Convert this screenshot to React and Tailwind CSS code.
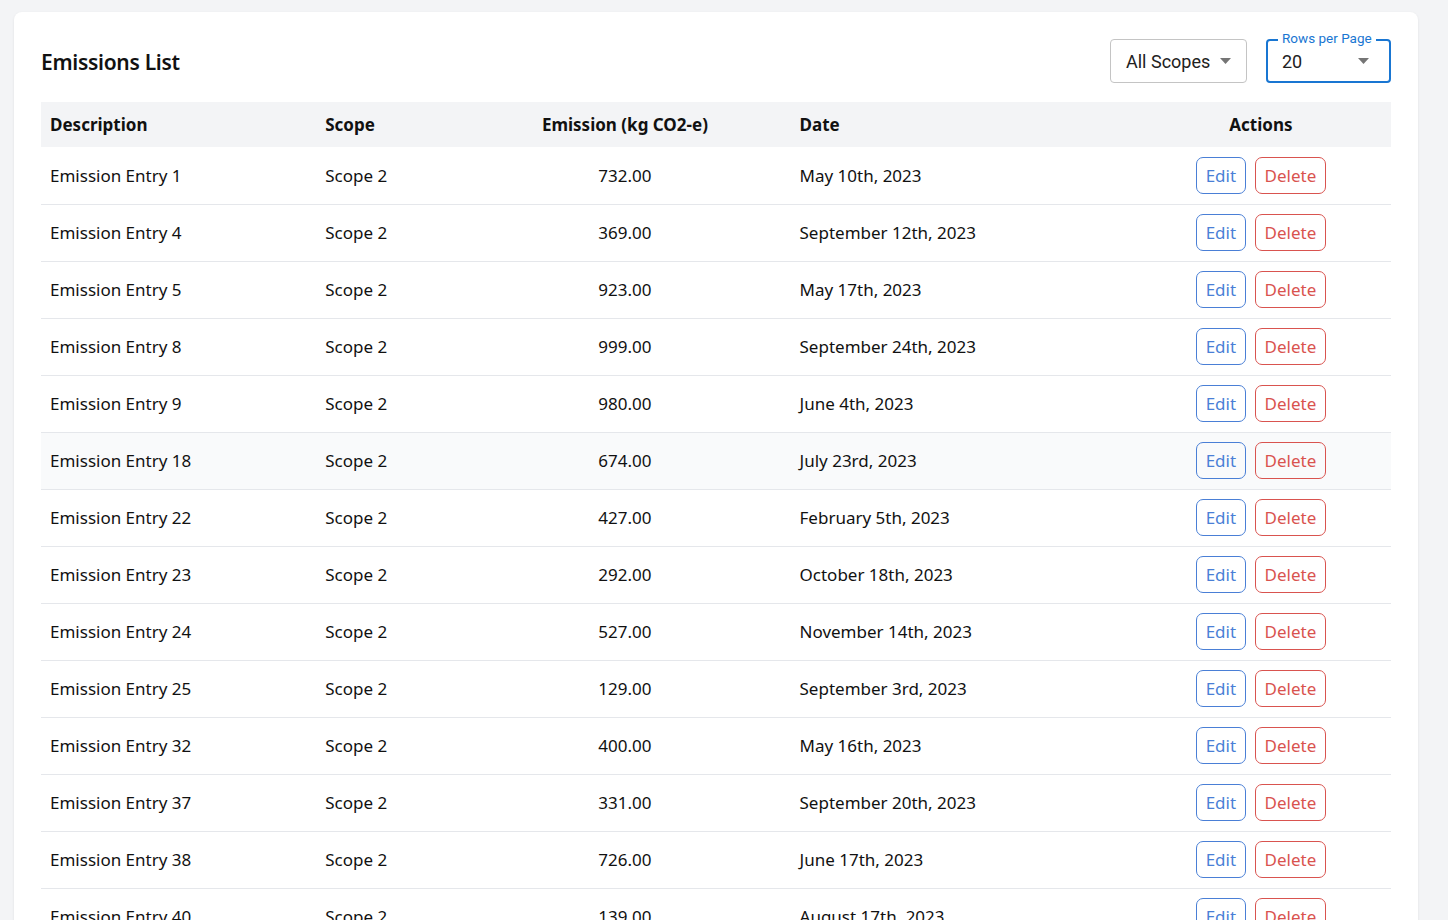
import React from "react";

const rows = [
  ["Emission Entry 1", "732.00", "May 10th, 2023"],
  ["Emission Entry 4", "369.00", "September 12th, 2023"],
  ["Emission Entry 5", "923.00", "May 17th, 2023"],
  ["Emission Entry 8", "999.00", "September 24th, 2023"],
  ["Emission Entry 9", "980.00", "June 4th, 2023"],
  ["Emission Entry 18", "674.00", "July 23rd, 2023"],
  ["Emission Entry 22", "427.00", "February 5th, 2023"],
  ["Emission Entry 23", "292.00", "October 18th, 2023"],
  ["Emission Entry 24", "527.00", "November 14th, 2023"],
  ["Emission Entry 25", "129.00", "September 3rd, 2023"],
  ["Emission Entry 32", "400.00", "May 16th, 2023"],
  ["Emission Entry 37", "331.00", "September 20th, 2023"],
  ["Emission Entry 38", "726.00", "June 17th, 2023"],
  ["Emission Entry 40", "139.00", "August 17th, 2023"],
  ["Emission Entry 41", "512.00", "March 2nd, 2023"],
];

function Caret() {
  return (
    <svg width="11" height="6" viewBox="0 0 11 6" className="fill-[#757575]">
      <path d="M0 0 L11 0 L5.5 6 Z" />
    </svg>
  );
}

export default function App() {
  return (
    <div className="min-h-screen bg-[#f3f4f6] pt-[12px] pl-[14px] pr-[30px] font-['Noto_Sans',sans-serif] text-[#111]">
      <div className="bg-white rounded-[8px] shadow-[0_1px_3px_rgba(0,0,0,0.08)] px-[27px] pt-[27px] pb-[20px]">
        <div className="flex items-center justify-between h-[44px] mb-[19px]">
          <h2 className="text-[21px] font-semibold tracking-[-0.3px] pt-[4px]">Emissions List</h2>
          <div className="flex items-center gap-[19px] font-['Roboto',sans-serif]">
            <div className="h-[44px] w-[137px] border border-[#c4c4c4] rounded-[4px] flex items-center pl-[15px] pr-[15px] justify-between text-[18px] text-[#212121]">
              <span>All Scopes</span>
              <Caret />
            </div>
            <div className="relative h-[44px] w-[125px] border-2 border-[#1976d2] rounded-[4px] flex items-center pl-[14px] pr-[20px] justify-between text-[18px] text-[#212121]">
              <span className="absolute -top-[12px] left-[10px] bg-white px-[4px] text-[13.5px] text-[#1976d2] leading-[18px]">Rows per Page</span>
              <span>20</span>
              <Caret />
            </div>
          </div>
        </div>
        <table className="w-full border-collapse table-fixed text-[17px]">
          <colgroup>
            <col className="w-[275px]" />
            <col className="w-[143px]" />
            <col className="w-[331px]" />
            <col className="w-[340px]" />
            <col className="w-[260px]" />
          </colgroup>
          <thead>
            <tr className="bg-[#f3f4f6] h-[45px]">
              <th className="text-left pl-[9px] font-bold">Description</th>
              <th className="text-left pl-[9px] font-bold">Scope</th>
              <th className="text-center font-bold">Emission (kg CO2-e)</th>
              <th className="text-left pl-[9px] font-bold">Date</th>
              <th className="text-center font-bold">Actions</th>
            </tr>
          </thead>
          <tbody>
            {rows.map((r, i) => (
              <tr
                key={i}
                className={`h-[57px] border-b border-[#e5e7eb] ${i === 5 ? "bg-[#f9fafb]" : ""}`}
              >
                <td className="pl-[9px]">{r[0]}</td>
                <td className="pl-[9px]">Scope 2</td>
                <td className="text-center">{r[1]}</td>
                <td className="pl-[9px]">{r[2]}</td>
                <td>
                  <div className="flex justify-center gap-[9px]">
                    <button className="h-[37px] w-[50px] border border-[#4a7fd6] text-[#4a7fd6] rounded-[7px] text-[17px]">Edit</button>
                    <button className="h-[37px] w-[71px] border border-[#d9534f] text-[#d9534f] rounded-[7px] text-[17px]">Delete</button>
                  </div>
                </td>
              </tr>
            ))}
          </tbody>
        </table>
      </div>
    </div>
  );
}
